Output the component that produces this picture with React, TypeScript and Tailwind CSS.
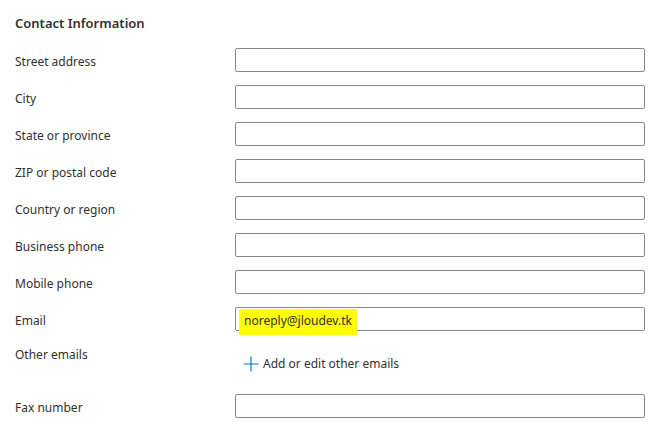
const FIELDS = [
  "Street address",
  "City",
  "State or province",
  "ZIP or postal code",
  "Country or region",
  "Business phone",
  "Mobile phone",
];

const FONT = { fontFamily: '"Segoe UI", "Noto Sans", sans-serif' };

const Field = ({ label, value }: { label: string; value?: string }) => (
  <div className="grid grid-cols-[220px_410px] items-center mt-[13px]">
    <label className="pt-[3px] text-[12px] leading-[18px] text-[#323130]">{label}</label>
    <div className="relative h-[24px] rounded-[2px] border border-[#8a8886] bg-white">
      {value && (
        <span className="absolute left-[3px] top-[1px] h-[26px] px-[5px] bg-[#ffff00] text-[12px] leading-[24px] text-[#323130]">
          {value}
        </span>
      )}
    </div>
  </div>
);

export default function App() {
  return (
    <div className="w-[666px] h-[436px] bg-white pl-[15px] pt-[13px] flex flex-col" style={FONT}>
      <h2 className="text-[13px] leading-[20px] font-semibold text-[#323130] mb-[2px]">
        Contact Information
      </h2>
      {FIELDS.map((f) => (
        <Field key={f} label={f} />
      ))}
      <Field label="Email" value="noreply@jloudev.tk" />
      <div className="grid grid-cols-[220px_410px] mt-[14px]">
        <span className="pt-[1px] text-[12px] leading-[18px] text-[#323130]">Other emails</span>
        <button className="mt-[3px] h-[32px] flex items-center gap-[4px] pl-[8px] text-[12px] text-[#323130]">
          <svg width="16" height="16" viewBox="0 0 16 16" className="shrink-0">
            <path d="M8 0.5V15.5M0.5 8H15.5" stroke="#0078d4" strokeWidth="1.2" fill="none" />
          </svg>
          Add or edit other emails
        </button>
      </div>
      <div className="grid grid-cols-[220px_410px] items-center mt-[14px]">
        <label className="pt-[3px] text-[12px] leading-[18px] text-[#323130]">Fax number</label>
        <div className="h-[24px] rounded-[2px] border border-[#8a8886] bg-white" />
      </div>
    </div>
  );
}
